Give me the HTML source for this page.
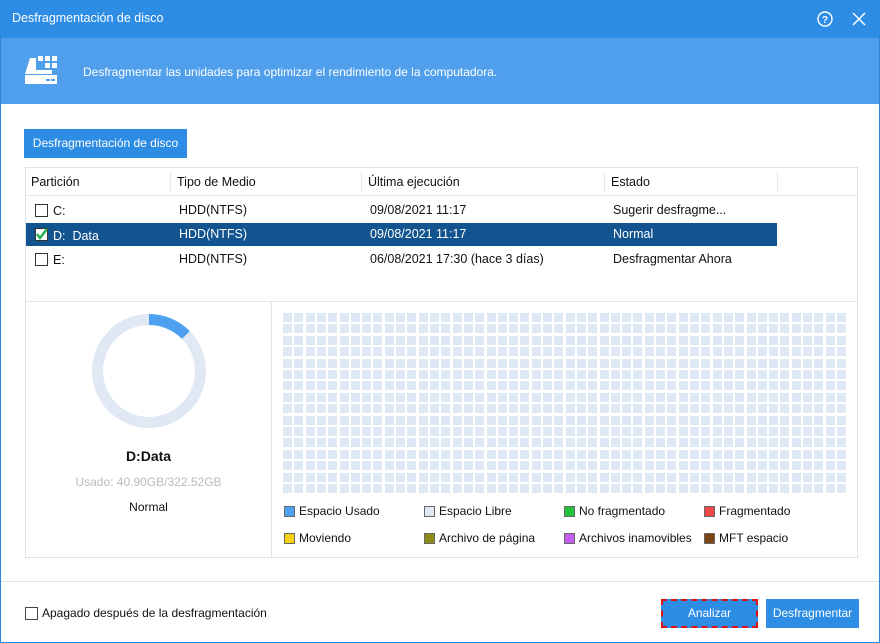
<!DOCTYPE html>
<html><head><meta charset="utf-8"><style>
*{margin:0;padding:0;box-sizing:border-box}
body{width:880px;height:643px;overflow:hidden;font-family:"Liberation Sans",sans-serif;font-size:13px;color:#111;background:#fff;position:relative}
.a{position:absolute}
.win{left:0;top:0;width:880px;height:643px;border:1px solid #2b88de;border-top:none}
.cb{width:13px;height:13px;border:1px solid #333;background:#fff}
.grid{left:283px;top:313px;width:563px;height:180px;display:grid;grid-template-columns:repeat(50,1fr);grid-template-rows:repeat(16,1fr);gap:2.3px}
.grid i{background:#dde8f4;display:block}
.lg{width:11px;height:11px;border:1px solid #666}
.t{font-size:12.5px}
</style></head><body>
<div class="a" style="left:0;top:0;width:880px;height:38px;background:#2d8ce3"></div>
<div class="a" style="left:12px;top:11px;color:#fff;font-size:12.5px">Desfragmentación de disco</div>
<svg class="a" style="left:816px;top:10px" width="18" height="18" viewBox="0 0 18 18"><circle cx="9" cy="9" r="7" fill="none" stroke="#fff" stroke-width="1.4"/><text x="9" y="13" fill="#fff" font-size="10" font-weight="bold" text-anchor="middle" font-family="Liberation Sans">?</text></svg>
<svg class="a" style="left:852px;top:12px" width="14" height="14"><path d="M1 1L13 13M13 1L1 13" stroke="#fff" stroke-width="1.5"/></svg>
<div class="a" style="left:0;top:38px;width:880px;height:66px;background:#4f9fec"></div>
<svg class="a" style="left:24px;top:55px" width="36" height="30" viewBox="0 0 36 30"><g fill="#fff"><rect x="14" y="1" width="5" height="5"/><rect x="21" y="1" width="5" height="5"/><rect x="28" y="1" width="5" height="5"/><rect x="21" y="8" width="5" height="5"/><rect x="28" y="8" width="5" height="5"/><path d="M6 3h6v12h16v4H1z"/><rect x="1" y="20" width="32" height="9"/></g><rect x="22" y="24" width="4" height="2" fill="#4f9fec"/><rect x="27" y="24" width="4" height="2" fill="#4f9fec"/></svg>
<div class="a" style="left:83px;top:65px;color:#fff;font-size:12px">Desfragmentar las unidades para optimizar el rendimiento de la computadora.</div>
<div class="a" style="left:24px;top:129px;width:163px;height:29px;background:#2d8ce3;color:#fff;font-size:12px;line-height:29px;text-align:center">Desfragmentación de disco</div>
<div class="a" style="left:25px;top:167px;width:833px;height:391px;border:1px solid #dde3ea"></div>
<div class="a" style="left:26px;top:168px;width:831px;height:28px;border-bottom:1px solid #e3e6ea"></div>
<div class="a" style="left:170px;top:172px;width:1px;height:20px;background:#e6e8eb"></div>
<div class="a" style="left:361px;top:172px;width:1px;height:20px;background:#e6e8eb"></div>
<div class="a" style="left:604px;top:172px;width:1px;height:20px;background:#e6e8eb"></div>
<div class="a" style="left:777px;top:172px;width:1px;height:20px;background:#e6e8eb"></div>
<div class="a t" style="left:31px;top:175px">Partición</div>
<div class="a t" style="left:177px;top:175px">Tipo de Medio</div>
<div class="a t" style="left:368px;top:175px">Última ejecución</div>
<div class="a t" style="left:611px;top:175px">Estado</div>
<div class="a" style="left:26px;top:223px;width:751px;height:23px;background:#12548f"></div>
<div class="a cb" style="left:35px;top:204px"></div>
<div class="a t" style="left:53px;top:204px">C:</div>
<div class="a t" style="left:179px;top:203px">HDD(NTFS)</div>
<div class="a t" style="left:370px;top:203px">09/08/2021 11:17</div>
<div class="a t" style="left:613px;top:203px">Sugerir desfragme...</div>
<div class="a cb" style="left:35px;top:228px"></div>
<svg class="a" style="left:35px;top:227px" width="14" height="14"><path d="M2 7l3 4 7-9" stroke="#22b14c" stroke-width="2.5" fill="none"/></svg>
<div class="a t" style="left:53px;top:229px;color:#fff">D:&nbsp; Data</div>
<div class="a t" style="left:179px;top:227px;color:#fff">HDD(NTFS)</div>
<div class="a t" style="left:370px;top:227px;color:#fff">09/08/2021 11:17</div>
<div class="a t" style="left:613px;top:227px;color:#fff">Normal</div>
<div class="a cb" style="left:35px;top:253px"></div>
<div class="a t" style="left:53px;top:253px">E:</div>
<div class="a t" style="left:179px;top:252px">HDD(NTFS)</div>
<div class="a t" style="left:370px;top:252px">06/08/2021 17:30 (hace 3 días)</div>
<div class="a t" style="left:613px;top:252px">Desfragmentar Ahora</div>
<div class="a" style="left:26px;top:301px;width:831px;height:1px;background:#e3e6ea"></div>
<div class="a" style="left:271px;top:302px;width:1px;height:255px;background:#e3e6ea"></div>
<svg class="a" style="left:89px;top:311px" width="120" height="120"><circle cx="60" cy="60" r="51.5" fill="none" stroke="#dfe8f3" stroke-width="11"/><circle cx="60" cy="60" r="51.5" fill="none" stroke="#4ea1f0" stroke-width="11" stroke-dasharray="41 400" transform="rotate(-90 60 60)"/></svg>
<div class="a" style="left:26px;top:448px;width:245px;text-align:center;font-weight:bold;font-size:14px">D:Data</div>
<div class="a" style="left:26px;top:475px;width:245px;text-align:center;color:#bbb;font-size:12px">Usado: 40.90GB/322.52GB</div>
<div class="a" style="left:26px;top:500px;width:245px;text-align:center;font-size:12px">Normal</div>
<div class="a grid" id="g"></div>
<div class="a lg" style="left:284px;top:506px;background:#4ea1f0"></div><div class="a" style="left:299px;top:504px;font-size:12px">Espacio Usado</div>
<div class="a lg" style="left:424px;top:506px;background:#dde8f4"></div><div class="a" style="left:439px;top:504px;font-size:12px">Espacio Libre</div>
<div class="a lg" style="left:564px;top:506px;background:#22c33a"></div><div class="a" style="left:579px;top:504px;font-size:12px">No fragmentado</div>
<div class="a lg" style="left:704px;top:506px;background:#f04848"></div><div class="a" style="left:719px;top:504px;font-size:12px">Fragmentado</div>
<div class="a lg" style="left:284px;top:533px;background:#f5d10f"></div><div class="a" style="left:299px;top:531px;font-size:12px">Moviendo</div>
<div class="a lg" style="left:424px;top:533px;background:#8d8a17"></div><div class="a" style="left:439px;top:531px;font-size:12px">Archivo de página</div>
<div class="a lg" style="left:564px;top:533px;background:#c55df0"></div><div class="a" style="left:579px;top:531px;font-size:12px">Archivos inamovibles</div>
<div class="a lg" style="left:704px;top:533px;background:#7a4515"></div><div class="a" style="left:719px;top:531px;font-size:12px">MFT espacio</div>
<div class="a" style="left:1px;top:581px;width:878px;height:1px;background:#dde3ea"></div>
<div class="a cb" style="left:25px;top:607px;border-color:#444"></div>
<div class="a" style="left:42px;top:606px;font-size:12px">Apagado después de la desfragmentación</div>
<div class="a" style="left:661px;top:599px;width:97px;height:29px;background:#2d8ce3;border:2px dashed #e01010;color:#fff;font-size:12px;line-height:25px;text-align:center">Analizar</div>
<div class="a" style="left:766px;top:599px;width:93px;height:29px;background:#2d8ce3;color:#fff;font-size:12px;line-height:29px;text-align:center">Desfragmentar</div>
<div class="a win"></div>
<script>var g=document.getElementById('g'),s='';for(var i=0;i<800;i++)s+='<i></i>';g.innerHTML=s;</script>
</body></html>
